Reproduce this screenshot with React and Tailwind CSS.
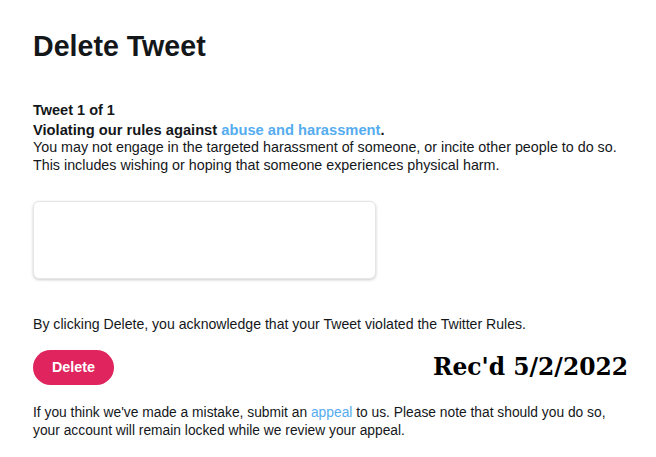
import React from 'react';

const App = () => {
  return (
    <div className="min-h-screen bg-white text-[#14171a] font-['Liberation_Sans',Arial,sans-serif] pl-[33px] pr-[28px] pt-[28px]">
      <h1 className="text-[28.6px] font-bold leading-[36px]">Delete Tweet</h1>

      <div className="mt-[38px] text-[14.3px] leading-[17.5px]">
        <p className="font-bold text-[14.5px]">Tweet 1 of 1</p>
        <p className="mt-[2px] font-bold text-[14.7px]">
          Violating our rules against <span className="text-[#55acee]">abuse and harassment</span>.
        </p>
        <p>You may not engage in the targeted harassment of someone, or incite other people to do so.</p>
        <p>This includes wishing or hoping that someone experiences physical harm.</p>
      </div>

      {/* Tweet card */}
      <div className="mt-[27px] w-[343px] h-[78px] rounded-[6px] bg-white border border-[#e6e6e6] shadow-[0_1px_3px_rgba(0,0,0,0.2)]"></div>

      <p className="mt-[37px] text-[14.1px] leading-[17px]">
        By clicking Delete, you acknowledge that your Tweet violated the Twitter Rules.
      </p>

      <div className="mt-[17px] flex items-center justify-between">
        <button className="h-[35px] w-[81px] rounded-full bg-[#e0245e] text-white text-[14.3px] font-bold">
          Delete
        </button>
        <span className="font-['DejaVu_Serif',serif] font-bold text-[23.4px] text-black">Rec'd 5/2/2022</span>
      </div>

      <p className="mt-[19px] text-[13.8px] leading-[17.5px]">
        If you think we've made a mistake, submit an <span className="text-[#55acee]">appeal</span> to us. Please note that should you do so,
        <br />
        your account will remain locked while we review your appeal.
      </p>
    </div>
  );
};

export default App;
